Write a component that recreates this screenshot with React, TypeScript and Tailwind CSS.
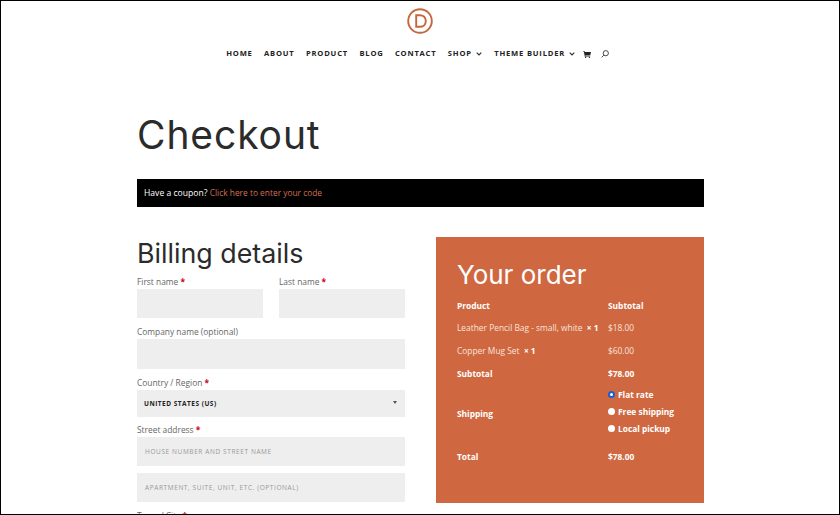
const nav = [
  { t: "HOME" },
  { t: "ABOUT" },
  { t: "PRODUCT" },
  { t: "BLOG" },
  { t: "CONTACT" },
  { t: "SHOP", c: true },
  { t: "THEME BUILDER", c: true },
];

function Chevron() {
  return (
    <svg width="6" height="4" viewBox="0 0 6 4" className="ml-[4px] mr-[1px]" fill="none" stroke="#333" strokeWidth="1.2">
      <path d="M0.7 0.7 3 3 5.3 0.7" />
    </svg>
  );
}

function Label({ text, req }: { text: string; req?: boolean }) {
  return (
    <div className="text-[8.4px] leading-[14px] text-[#666]">
      {text}
      {req && <span className="text-[#d0021b] font-bold"> *</span>}
    </div>
  );
}

function Field({ ph, h = "h-[29px]" }: { ph?: string; h?: string }) {
  return (
    <div className={`${h} bg-[#eeeeee] flex items-center px-2 text-[6.5px] tracking-[0.6px] text-[#999]`}>{ph}</div>
  );
}

function Radio({ on, text }: { on?: boolean; text: string }) {
  return (
    <div className="flex items-center h-[17px] gap-[3px]">
      <span className={`w-[7px] h-[7px] rounded-full bg-white -mt-[2px] ${on ? "border-2 border-[#1a5fd0]" : ""}`} />
      <span>{text}</span>
    </div>
  );
}

export default function App() {
  return (
    <div className="h-[515px] w-[840px] overflow-hidden border border-black bg-white font-['Open_Sans',sans-serif] relative">
      <header className="flex flex-col items-center pt-[7px]">
        <svg width="26" height="26" viewBox="0 0 26 26" fill="none" stroke="#c4673f">
          <circle cx="13" cy="13" r="11.8" strokeWidth="1.9" />
          <path d="M9.2 7.2h3.6c3.6 0 6 2.3 6 5.8s-2.4 5.8-6 5.8H9.2z" strokeWidth="1.9" />
        </svg>
        <nav className="flex items-center mt-[14px] mr-[5px] h-[12px] text-[7.6px] font-bold tracking-[0.8px] text-[#222] gap-[11.4px]">
          {nav.map((n) => (
            <span key={n.t} className="flex items-center whitespace-nowrap">
              {n.t}
              {n.c && <Chevron />}
            </span>
          ))}
          <svg width="8" height="7" viewBox="0 0 8 7" fill="#222" className="-ml-[4px]">
            <path d="M0 0h1.5l.3 1H8L7.2 4.4H2.3l.2.8h4.7v.6H1.8L.9.6H0z" />
            <circle cx="2.6" cy="6.4" r=".6" />
            <circle cx="6.4" cy="6.4" r=".6" />
          </svg>
          <svg width="8" height="8" viewBox="0 0 8 8" fill="none" stroke="#333" strokeWidth="0.9" className="-ml-[2px]">
            <circle cx="4.8" cy="3.2" r="2.6" />
            <path d="M2.9 5.1.6 7.4" />
          </svg>
        </nav>
      </header>

      <main className="w-[567px] ml-[136px]">
        <h1 className="mt-[55px] h-[40px] leading-[40px] text-[39px] font-['Inter',sans-serif] text-[#2b2b2b] tracking-[0.9px]">
          Checkout
        </h1>
        <div className="mt-[24px] h-[28px] bg-black flex items-center pl-[7px] text-[8.6px] text-white">
          Have a coupon?&nbsp;<span className="text-[8.4px] text-[#d0704f]">Click here to enter your code</span>
        </div>

        <div className="flex gap-[31px] mt-[30px]">
          <section className="w-[268px]">
            <h2 className="h-[33px] leading-[32px] text-[26.8px] font-['Inter',sans-serif] text-[#2b2b2b]">Billing details</h2>
            <div className="flex gap-[16px] mt-[5px]">
              <div className="flex-1">
                <Label text="First name" req />
                <Field />
              </div>
              <div className="flex-1">
                <Label text="Last name" req />
                <Field />
              </div>
            </div>
            <div className="mt-[7px]">
              <Label text="Company name (optional)" />
              <Field h="h-[30px]" />
            </div>
            <div className="mt-[7px]">
              <Label text="Country / Region" req />
              <div className="h-[27px] bg-[#eeeeee] flex items-center justify-between pl-[7px] pr-[8px] text-[6.5px] font-bold tracking-[0.5px] text-[#222]">
                <span>UNITED STATES (US)</span>
                <span className="w-0 h-0 border-x-[2px] border-x-transparent border-t-[3px] border-t-[#555] -mt-[2px]" />
              </div>
            </div>
            <div className="mt-[6px]">
              <Label text="Street address" req />
              <Field ph="HOUSE NUMBER AND STREET NAME" />
            </div>
            <div className="mt-[7px]">
              <Field ph="APARTMENT, SUITE, UNIT, ETC. (OPTIONAL)" />
            </div>
            <div className="mt-[7px]">
              <Label text="Town / City" req />
            </div>
          </section>

          <aside className="w-[268px] h-[266px] bg-[#cf6841] px-[21px] text-white text-[8.4px]">
            <h2 className="pt-[21px] h-[56px] leading-[33px] text-[26px] font-['Inter',sans-serif] text-white">Your order</h2>
            <div className="grid grid-cols-[151px_1fr] auto-rows-auto mt-[2px]">
              <div className="h-[22px] flex items-center font-bold">Product</div>
              <div className="h-[22px] flex items-center font-bold">Subtotal</div>
              <div className="h-[23px] flex items-center text-[#f8e3da] whitespace-nowrap">
                Leather Pencil Bag - small, white&nbsp;&nbsp;<b className="text-white">× 1</b>
              </div>
              <div className="h-[23px] flex items-center text-[#f8e3da]">$18.00</div>
              <div className="h-[23px] flex items-center text-[#f8e3da]">
                Copper Mug Set&nbsp;&nbsp;<b className="text-white">× 1</b>
              </div>
              <div className="h-[23px] flex items-center text-[#f8e3da]">$60.00</div>
              <div className="h-[22px] flex items-center font-bold">Subtotal</div>
              <div className="h-[22px] flex items-center font-bold">$78.00</div>
              <div className="flex items-center font-bold">Shipping</div>
              <div className="pt-[2px] pb-[6px] font-bold">
                <Radio on text="Flat rate" />
                <Radio text="Free shipping" />
                <Radio text="Local pickup" />
              </div>
              <div className="h-[26px] flex items-center font-bold">Total</div>
              <div className="h-[26px] flex items-center font-bold">$78.00</div>
            </div>
          </aside>
        </div>
      </main>
    </div>
  );
}
